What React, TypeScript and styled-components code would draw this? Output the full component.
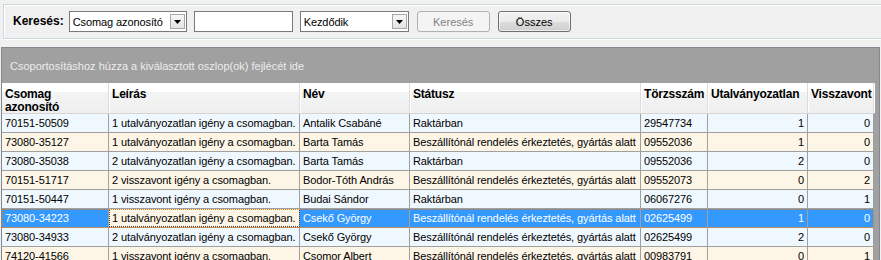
import styled, { createGlobalStyle } from 'styled-components';

const FONT = '"Liberation Sans", Arial, sans-serif';
const SELECTED = '#3399ff';
const GRID_LINE = '#a0a0a0';
const COLUMNS = '107px 191px 110px 231px 67px 100px 66px';

const GlobalStyle = createGlobalStyle`
  html, body {
    margin: 0;
    padding: 0;
    background: #f0f0f0;
    font-family: ${FONT};
    font-size: 11px;
    color: #000;
    overflow: hidden;
  }
`;

const Page = styled.div`
  width: 881px;
  height: 260px;
  overflow: hidden;
`;

const Toolbar = styled.div`
  height: 47px;
  padding: 4px 0 0 3px;
  box-sizing: border-box;
`;

const GroupBox = styled.div`
  display: flex;
  align-items: flex-start;
  gap: 7px;
  height: 35px;
  box-sizing: border-box;
  padding: 6px 0 0 9px;
  border: 1px solid #ccd6dd;
  border-right: none;
  box-shadow: inset 1px 1px 0 #fff, 0 1px 0 #fff;
`;

const Label = styled.span`
  font-weight: bold;
  font-size: 12px;
  line-height: 21px;
  margin-right: -2px;
`;

const Select = styled.div<{ width: number }>`
  display: flex;
  align-items: center;
  width: ${(p) => p.width}px;
  height: 21px;
  box-sizing: border-box;
  border: 1px solid #7a7a7a;
  background: #fff;
  padding: 0 1px 0 3px;
  font-size: 11px;
  letter-spacing: -0.1px;
`;

const SelectText = styled.span`
  flex: 1;
  white-space: nowrap;
  overflow: hidden;
`;

const DropButton = styled.span`
  display: flex;
  align-items: center;
  justify-content: center;
  width: 15px;
  height: 15px;
  box-sizing: border-box;
  border: 1px solid #a8a8a8;
  background: linear-gradient(#f7f7f7, #e3e3e3);
`;

const TextBox = styled.div`
  width: 99px;
  height: 21px;
  box-sizing: border-box;
  border: 1px solid #7a7a7a;
  background: #fff;
`;

const Button = styled.div<{ disabled?: boolean }>`
  display: flex;
  align-items: center;
  justify-content: center;
  width: 73px;
  height: 21px;
  box-sizing: border-box;
  margin-left: 1px;
  border-radius: 3px;
  font-size: 11px;
  border: 1px solid ${(p) => (p.disabled ? '#adb2b5' : '#707070')};
  color: ${(p) => (p.disabled ? '#838383' : '#000')};
  background: ${(p) =>
    p.disabled
      ? '#f4f4f4'
      : 'linear-gradient(#f2f2f2 0%, #ebebeb 50%, #dddddd 51%, #cfcfcf 100%)'};
  box-shadow: ${(p) => (p.disabled ? 'none' : 'inset 0 0 0 1px rgba(255,255,255,0.6)')};
`;

const GridPanel = styled.div`
  margin: 0 1px;
  border: 1px solid #828790;
  border-bottom: none;
  background: #a0a0a0;
  height: 213px;
  overflow: hidden;
`;

const GroupArea = styled.div`
  height: 35px;
  display: flex;
  align-items: center;
  padding-left: 8px;
  color: #ececec;
  font-size: 11px;
`;

const HeaderRow = styled.div`
  display: grid;
  grid-template-columns: ${COLUMNS};
  height: 31px;
  box-sizing: border-box;
  border-bottom: 1px solid #d5d5d5;
  background: linear-gradient(#ffffff 0%, #ffffff 30%, #f3f4f4 31%, #efefef 100%);
  width: 872px;
`;

const HeaderCell = styled.div`
  box-sizing: border-box;
  border-right: 1px solid #dcdcdc;
  box-shadow: 1px 0 0 #fff;
  padding: 5px 2px 0 3px;
  font-weight: bold;
  font-size: 12px;
  letter-spacing: -0.2px;
  line-height: 13px;
  white-space: nowrap;
  overflow: hidden;
`;

const Row = styled.div<{ $alt: boolean; $selected?: boolean }>`
  display: grid;
  grid-template-columns: ${COLUMNS};
  width: 872px;
  height: 19px;
  box-sizing: border-box;
  border-bottom: 1px solid ${GRID_LINE};
  background: ${(p) => (p.$selected ? SELECTED : p.$alt ? '#fdf5e6' : '#f0f8ff')};
  color: ${(p) => (p.$selected ? '#fff' : '#000')};
  outline: ${(p) => (p.$selected ? '1px dotted #e07a1f' : 'none')};
  outline-offset: -1px;
`;

const Cell = styled.div<{ $right?: boolean; $focused?: boolean; $alt?: boolean }>`
  box-sizing: border-box;
  border-right: 1px solid ${GRID_LINE};
  padding: 0 ${(p) => (p.$right ? 3 : 1)}px 0 3px;
  line-height: 19px;
  letter-spacing: -0.1px;
  text-align: ${(p) => (p.$right ? 'right' : 'left')};
  white-space: nowrap;
  overflow: hidden;
  ${(p) =>
    p.$focused &&
    `
    background: ${p.$alt ? '#fdf5e6' : '#f0f8ff'};
    color: #000;
    outline: 1px dotted #444;
    outline-offset: -1px;
  `}
`;

function Arrow() {
  return (
    <svg width='7' height='4' viewBox='0 0 7 4'>
      <path d='M0 0 H7 L3.5 4 Z' fill='#000' />
    </svg>
  );
}

const headers = ['Csomag\nazonosító', 'Leírás', 'Név', 'Státusz', 'Törzsszám', 'Utalványozatlan', 'Visszavont'];

const STOCK = 'Raktárban';
const SUPPLIER = 'Beszállítónál rendelés érkeztetés, gyártás alatt';
const U1 = '1 utalványozatlan igény a csomagban.';
const U2 = '2 utalványozatlan igény a csomagban.';
const V1 = '1 visszavont igény a csomagban.';
const V2 = '2 visszavont igény a csomagban.';

const rows = [
  ['70151-50509', U1, 'Antalik Csabáné', STOCK, '29547734', '1', '0'],
  ['73080-35127', U1, 'Barta Tamás', SUPPLIER, '09552036', '1', '0'],
  ['73080-35038', U2, 'Barta Tamás', STOCK, '09552036', '2', '0'],
  ['70151-51717', V2, 'Bodor-Tóth András', SUPPLIER, '09552073', '0', '2'],
  ['70151-50447', V1, 'Budai Sándor', STOCK, '06067276', '0', '1'],
  ['73080-34223', U1, 'Csekő György', SUPPLIER, '02625499', '1', '0'],
  ['73080-34933', U2, 'Csekő György', SUPPLIER, '02625499', '2', '0'],
  ['74120-41566', V1, 'Csomor Albert', SUPPLIER, '00983791', '0', '1'],
];

const SELECTED_ROW = 5;

export default function App() {
  return (
    <Page>
      <GlobalStyle />
      <Toolbar>
        <GroupBox>
          <Label>Keresés:</Label>
          <Select width={118}>
            <SelectText>Csomag azonosító</SelectText>
            <DropButton>
              <Arrow />
            </DropButton>
          </Select>
          <TextBox />
          <Select width={109}>
            <SelectText>Kezdődik</SelectText>
            <DropButton>
              <Arrow />
            </DropButton>
          </Select>
          <Button disabled>Keresés</Button>
          <Button>Összes</Button>
        </GroupBox>
      </Toolbar>
      <GridPanel>
        <GroupArea>Csoportosításhoz húzza a kiválasztott oszlop(ok) fejlécét ide</GroupArea>
        <HeaderRow>
          {headers.map((h) => (
            <HeaderCell key={h}>
              {h.split('\n').map((line) => (
                <div key={line}>{line}</div>
              ))}
            </HeaderCell>
          ))}
        </HeaderRow>
        {rows.map((row, i) => {
          const alt = i % 2 === 1;
          const selected = i === SELECTED_ROW;
          return (
            <Row key={row[0]} $alt={alt} $selected={selected}>
              {row.map((value, c) => (
                <Cell key={c} $right={c >= 5} $focused={selected && c === 1} $alt={alt}>
                  {value}
                </Cell>
              ))}
            </Row>
          );
        })}
      </GridPanel>
    </Page>
  );
}
